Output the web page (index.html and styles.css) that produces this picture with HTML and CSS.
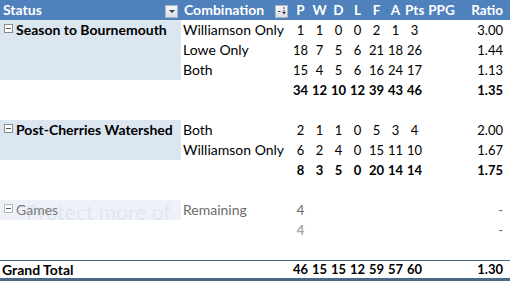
FILE: index.html
```html
<!DOCTYPE html>
<html>
<head>
<meta charset="utf-8">
<link rel="stylesheet" href="styles.css">
</head>
<body>
<div class="sheet">
<table class="pivot">
  <colgroup>
    <col class="c-status"><col class="c-comb">
    <col class="c-n"><col class="c-n"><col class="c-n"><col class="c-n"><col class="c-n"><col class="c-n">
    <col class="c-pts"><col class="c-ppg"><col class="c-ratio">
  </colgroup>
  <thead>
    <tr class="head">
      <th class="lbl"><div class="hcell"><span>Status</span><span class="btn"><svg width="10" height="10" viewBox="0 0 10 10"><path d="M2 4 L8 4 L5 7 Z" fill="#404040"/></svg></span></div></th>
      <th class="lbl"><div class="hcell"><span>Combination</span><span class="btn"><svg width="10" height="10" viewBox="0 0 10 10"><path d="M1 5.5 H3.5" stroke="#404040" stroke-width="1"/><path d="M7 1 V3 M7 4 V6" stroke="#404040" stroke-width="1"/><path d="M5 6 H9 L7 8.5 Z" fill="#404040"/></svg></span></div></th>
      <th>P</th><th>W</th><th>D</th><th>L</th><th>F</th><th>A</th><th>Pts</th><th>PPG</th><th class="ratio">Ratio</th>
    </tr>
  </thead>
  <tbody>
    <tr>
      <td class="grp" rowspan="3"><span class="exp"></span>Season to Bournemouth</td>
      <td class="lbl">Williamson Only</td>
      <td>1</td><td>1</td><td>0</td><td>0</td><td>2</td><td>1</td><td>3</td><td></td><td class="ratio">3.00</td>
    </tr>
    <tr>
      <td class="lbl">Lowe Only</td>
      <td>18</td><td>7</td><td>5</td><td>6</td><td>21</td><td>18</td><td>26</td><td></td><td class="ratio">1.44</td>
    </tr>
    <tr>
      <td class="lbl">Both</td>
      <td>15</td><td>4</td><td>5</td><td>6</td><td>16</td><td>24</td><td>17</td><td></td><td class="ratio">1.13</td>
    </tr>
    <tr class="tot">
      <td></td><td></td>
      <td>34</td><td>12</td><td>10</td><td>12</td><td>39</td><td>43</td><td>46</td><td></td><td class="ratio">1.35</td>
    </tr>
    <tr class="gap"><td colspan="11"></td></tr>
    <tr>
      <td class="grp" rowspan="2"><span class="exp"></span>Post-Cherries Watershed</td>
      <td class="lbl">Both</td>
      <td>2</td><td>1</td><td>1</td><td>0</td><td>5</td><td>3</td><td>4</td><td></td><td class="ratio">2.00</td>
    </tr>
    <tr>
      <td class="lbl">Williamson Only</td>
      <td>6</td><td>2</td><td>4</td><td>0</td><td>15</td><td>11</td><td>10</td><td></td><td class="ratio">1.67</td>
    </tr>
    <tr class="tot">
      <td></td><td></td>
      <td>8</td><td>3</td><td>5</td><td>0</td><td>20</td><td>14</td><td>14</td><td></td><td class="ratio">1.75</td>
    </tr>
    <tr class="gap"><td colspan="11"></td></tr>
    <tr class="muted">
      <td class="grp faint"><span class="exp"></span>Games</td>
      <td class="lbl">Remaining</td>
      <td>4</td><td></td><td></td><td></td><td></td><td></td><td></td><td></td><td class="ratio">-</td>
    </tr>
    <tr class="muted sub">
      <td></td><td></td>
      <td class="light">4</td><td></td><td></td><td></td><td></td><td></td><td></td><td></td><td class="ratio">-</td>
    </tr>
    <tr class="gap"><td colspan="11"></td></tr>
  </tbody>
  <tfoot>
    <tr class="grand">
      <td class="lbl">Grand Total</td><td></td>
      <td>46</td><td>15</td><td>15</td><td>12</td><td>59</td><td>57</td><td>60</td><td></td><td class="ratio">1.30</td>
    </tr>
  </tfoot>
</table>
<div class="watermark">Protect more of</div>
</div>
</body>
</html>
```
FILE: styles.css
```css
html, body {
  margin: 0;
  padding: 0;
  background: #ffffff;
}
.sheet {
  position: relative;
  width: 510px;
  height: 281px;
  overflow: hidden;
}
.pivot {
  border-collapse: collapse;
  table-layout: fixed;
  width: 510px;
  font-family: Lato, "Open Sans", sans-serif;
  font-size: 13px;
  color: #000000;
}
.c-status { width: 181px; }
.c-comb { width: 110px; }
.c-n { width: 19px; }
.c-pts { width: 19px; }
.c-ppg { width: 35px; }
.c-ratio { width: 51px; }

.pivot th, .pivot td {
  height: 20px;
  padding: 0;
  text-align: center;
  white-space: nowrap;
  overflow: visible;
  vertical-align: middle;
  line-height: 20px;
}
.head th {
  background: #4f81bd;
  color: #ffffff;
  font-weight: bold;
  font-size: 13.5px;
}
.hcell {
  display: flex;
  align-items: center;
  justify-content: space-between;
  padding: 0 3px 0 1px;
}
.pivot .lbl {
  text-align: left;
  padding-left: 2px;
  font-size: 14px;
}
.btn {
  display: flex;
  align-items: center;
  justify-content: center;
  width: 11px;
  height: 11px;
  background: linear-gradient(#f4f6f9, #d9dfe7);
  border: 1px solid #a9b6c6;
  margin-top: 2px;
}
.pivot .ratio {
  text-align: right;
  padding-right: 7px;
}
.grp {
  background: #dce6f1;
  text-align: left !important;
  vertical-align: top !important;
  font-weight: bold;
  font-size: 14px;
  padding-left: 4px !important;
}
.exp {
  display: inline-block;
  width: 7px;
  height: 7px;
  border: 1px solid #8a8a8a;
  margin-right: 3px;
  position: relative;
  top: -2px;
  background: #ffffff;
}
.exp::after {
  content: "";
  position: absolute;
  left: 1px;
  right: 1px;
  top: 3px;
  height: 1px;
  background: #555555;
}
.tot td {
  font-weight: bold;
}
.gap td {
  height: 20px;
}
.muted td {
  color: #6b6b6b;
}
.grp.faint {
  background: #eef2f8;
  font-weight: normal;
  color: #7a7a7a;
}
.grp.faint .exp {
  border-color: #b8b8b8;
}
.sub .light {
  color: #a6a6a6;
  font-weight: bold;
}
.grand td {
  font-weight: bold;
  height: 17px;
  line-height: 17px;
  border-top: 1px solid #4a6a8a;
  border-bottom: 3px solid #4a6a8a;
}
.watermark {
  position: absolute;
  left: 26px;
  top: 199px;
  font-family: Lato, "Open Sans", sans-serif;
  font-size: 21px;
  color: rgba(120, 140, 170, 0.13);
  white-space: nowrap;
  pointer-events: none;
}
```
